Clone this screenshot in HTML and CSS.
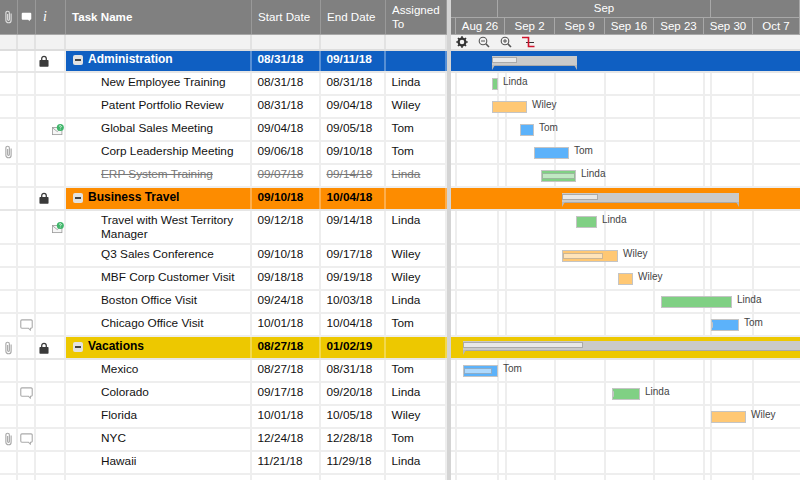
FILE: index.html
```html
<!DOCTYPE html>
<html lang="en">
<head>
  <meta charset="UTF-8">
  <title>Project Gantt</title>
  <link rel="stylesheet" href="styles.css">
</head>
<body>
  <svg class="defs" width="0" height="0">
    <symbol id="clip" viewBox="0 0 10 16"><path d="M8 4v7.600a3 3 0 0 1-6 0V3.400a2 2 0 0 1 4 0v7.400a1 1 0 0 1-2 0V4.600" fill="none" stroke="currentColor" stroke-width="1.300"/></symbol>
    <symbol id="note" viewBox="0 0 14 13"><path d="M2 1h10a1.200 1.200 0 0 1 1.200 1.200v6.600A1.200 1.200 0 0 1 12 10h-.6l-.3 2-2-2H2A1.200 1.200 0 0 1 .8 8.800V2.200A1.200 1.200 0 0 1 2 1z" fill="#fff" stroke="#aaa" stroke-width="1.200"/></symbol>
    <symbol id="lock" viewBox="0 0 11 13"><path d="M3 6V3.800a2.500 2.500 0 0 1 5 0V6" fill="none" stroke="#3a3a3a" stroke-width="1.400"/><rect x=".5" y="5.400" width="10" height="7.400" rx=".8" fill="#3a3a3a"/></symbol>
    <symbol id="mail" viewBox="0 0 15 14"><rect x=".6" y="4.600" width="11.800" height="8.800" fill="#f6f6f6" stroke="#999"/><path d="M.8 5l5.800 4.600L12 5" fill="none" stroke="#999"/><circle cx="10.400" cy="4.400" r="4.400" fill="#3fb56a"/><path d="M9.200 3.400a1.200 1.200 0 1 1 1.800 1.100c-.5.300-.6.500-.6 1M10.400 6.400v.5" fill="none" stroke="#fff" stroke-width="1"/></symbol>
  </svg>

  <div class="app">
    <div class="sheet">
      <div class="row head">
        <div class="cell icon-head"><svg class="ic-clip"><use href="#clip"/></svg></div>
        <div class="cell icon-head">
          <svg width="11" height="10" viewBox="0 0 14 13"><path d="M2 1h10a1.200 1.200 0 0 1 1.200 1.200v6.600A1.200 1.200 0 0 1 12 10h-.6l-.3 2-2-2H2A1.200 1.200 0 0 1 .8 8.800V2.200A1.200 1.200 0 0 1 2 1z" fill="#fff"/></svg>
        </div>
        <div class="cell info">i</div>
        <div class="cell name-head">Task Name</div>
        <div class="cell">Start Date</div>
        <div class="cell">End Date</div>
        <div class="cell assigned-head">Assigned To</div>
      </div>
      <div class="row sub">
        <div class="cell"></div><div class="cell"></div><div class="cell"></div><div class="cell"></div><div class="cell"></div><div class="cell"></div><div class="cell"></div>
      </div>

      <div class="row group blue first">
        <div class="cell"></div><div class="cell"></div>
        <div class="cell lockcell"><svg class="ic-lock"><use href="#lock"/></svg></div>
        <div class="cell title"><span class="toggle"></span>Administration</div>
        <div class="cell">08/31/18</div><div class="cell">09/11/18</div><div class="cell"></div>
      </div>
      <div class="row">
        <div class="cell"></div><div class="cell"></div><div class="cell"></div>
        <div class="cell task">New Employee Training</div>
        <div class="cell">08/31/18</div><div class="cell">08/31/18</div><div class="cell">Linda</div>
      </div>
      <div class="row">
        <div class="cell"></div><div class="cell"></div><div class="cell"></div>
        <div class="cell task">Patent Portfolio Review</div>
        <div class="cell">08/31/18</div><div class="cell">09/04/18</div><div class="cell">Wiley</div>
      </div>
      <div class="row">
        <div class="cell"></div><div class="cell"></div>
        <div class="cell mail"><svg class="ic-mail"><use href="#mail"/></svg></div>
        <div class="cell task">Global Sales Meeting</div>
        <div class="cell">09/04/18</div><div class="cell">09/05/18</div><div class="cell">Tom</div>
      </div>
      <div class="row">
        <div class="cell mid"><svg class="ic-clip"><use href="#clip"/></svg></div><div class="cell"></div><div class="cell"></div>
        <div class="cell task">Corp Leadership Meeting</div>
        <div class="cell">09/06/18</div><div class="cell">09/10/18</div><div class="cell">Tom</div>
      </div>
      <div class="row done">
        <div class="cell"></div><div class="cell"></div><div class="cell"></div>
        <div class="cell task">ERP System Training</div>
        <div class="cell">09/07/18</div><div class="cell">09/14/18</div><div class="cell">Linda</div>
      </div>

      <div class="row group orange">
        <div class="cell"></div><div class="cell"></div>
        <div class="cell lockcell"><svg class="ic-lock"><use href="#lock"/></svg></div>
        <div class="cell title"><span class="toggle"></span>Business Travel</div>
        <div class="cell">09/10/18</div><div class="cell">10/04/18</div><div class="cell"></div>
      </div>
      <div class="row tall">
        <div class="cell"></div><div class="cell"></div>
        <div class="cell mail"><svg class="ic-mail"><use href="#mail"/></svg></div>
        <div class="cell task">Travel with West Territory Manager</div>
        <div class="cell">09/12/18</div><div class="cell">09/14/18</div><div class="cell">Linda</div>
      </div>
      <div class="row">
        <div class="cell"></div><div class="cell"></div><div class="cell"></div>
        <div class="cell task">Q3 Sales Conference</div>
        <div class="cell">09/10/18</div><div class="cell">09/17/18</div><div class="cell">Wiley</div>
      </div>
      <div class="row">
        <div class="cell"></div><div class="cell"></div><div class="cell"></div>
        <div class="cell task">MBF Corp Customer Visit</div>
        <div class="cell">09/18/18</div><div class="cell">09/19/18</div><div class="cell">Wiley</div>
      </div>
      <div class="row">
        <div class="cell"></div><div class="cell"></div><div class="cell"></div>
        <div class="cell task">Boston Office Visit</div>
        <div class="cell">09/24/18</div><div class="cell">10/03/18</div><div class="cell">Linda</div>
      </div>
      <div class="row">
        <div class="cell"></div>
        <div class="cell mid"><svg class="ic-note"><use href="#note"/></svg></div>
        <div class="cell"></div>
        <div class="cell task">Chicago Office Visit</div>
        <div class="cell">10/01/18</div><div class="cell">10/04/18</div><div class="cell">Tom</div>
      </div>

      <div class="row group yellow">
        <div class="cell mid"><svg class="ic-clip"><use href="#clip"/></svg></div><div class="cell"></div>
        <div class="cell lockcell"><svg class="ic-lock"><use href="#lock"/></svg></div>
        <div class="cell title"><span class="toggle"></span>Vacations</div>
        <div class="cell">08/27/18</div><div class="cell">01/02/19</div><div class="cell"></div>
      </div>
      <div class="row">
        <div class="cell"></div><div class="cell"></div><div class="cell"></div>
        <div class="cell task">Mexico</div>
        <div class="cell">08/27/18</div><div class="cell">08/31/18</div><div class="cell">Tom</div>
      </div>
      <div class="row">
        <div class="cell"></div>
        <div class="cell mid"><svg class="ic-note"><use href="#note"/></svg></div>
        <div class="cell"></div>
        <div class="cell task">Colorado</div>
        <div class="cell">09/17/18</div><div class="cell">09/20/18</div><div class="cell">Linda</div>
      </div>
      <div class="row">
        <div class="cell"></div><div class="cell"></div><div class="cell"></div>
        <div class="cell task">Florida</div>
        <div class="cell">10/01/18</div><div class="cell">10/05/18</div><div class="cell">Wiley</div>
      </div>
      <div class="row">
        <div class="cell mid"><svg class="ic-clip"><use href="#clip"/></svg></div>
        <div class="cell mid"><svg class="ic-note"><use href="#note"/></svg></div>
        <div class="cell"></div>
        <div class="cell task">NYC</div>
        <div class="cell">12/24/18</div><div class="cell">12/28/18</div><div class="cell">Tom</div>
      </div>
      <div class="row">
        <div class="cell"></div><div class="cell"></div><div class="cell"></div>
        <div class="cell task">Hawaii</div>
        <div class="cell">11/21/18</div><div class="cell">11/29/18</div><div class="cell">Linda</div>
      </div>
      <div class="row">
        <div class="cell"></div><div class="cell"></div><div class="cell"></div>
        <div class="cell task">Seattle</div>
        <div class="cell">12/03/18</div><div class="cell">01/02/19</div><div class="cell">Wiley</div>
      </div>
    </div>

    <div class="splitter"></div>

    <div class="gantt">
      <div class="months">
        <div class="month" style="width:47px"></div>
        <div class="month" style="width:213px">Sep</div>
        <div class="month" style="width:89px"></div>
      </div>
      <div class="weeks">
        <div class="week" style="width:5px"></div>
        <div class="week" style="width:49px">Aug 26</div>
        <div class="week" style="width:50px">Sep 2</div>
        <div class="week" style="width:50px">Sep 9</div>
        <div class="week" style="width:49px">Sep 16</div>
        <div class="week" style="width:50px">Sep 23</div>
        <div class="week" style="width:49px">Sep 30</div>
        <div class="week" style="width:47px">Oct 7</div>
      </div>
      <div class="tools">
        <svg width="12" height="12" viewBox="0 0 12 12"><circle cx="6" cy="6" r="3.400" fill="none" stroke="#333" stroke-width="2.200"/><path d="M6 .3v2M6 9.700v2M.3 6h2M9.700 6h2M2 2l1.400 1.400M8.600 8.600L10 10M10 2L8.600 3.400M3.400 8.600L2 10" stroke="#333" stroke-width="1.700"/></svg>
        <svg width="12" height="12" viewBox="0 0 12 12"><circle cx="5" cy="5" r="3.800" fill="none" stroke="#555" stroke-width="1.100"/><path d="M7.800 7.800L11 11" stroke="#555" stroke-width="1.600"/><path d="M3 5h4" stroke="#555"/></svg>
        <svg width="12" height="12" viewBox="0 0 12 12"><circle cx="5" cy="5" r="3.800" fill="none" stroke="#555" stroke-width="1.100"/><path d="M7.800 7.800L11 11" stroke="#555" stroke-width="1.600"/><path d="M3 5h4M5 3v4" stroke="#555"/></svg>
        <svg width="13" height="12" viewBox="0 0 13 12"><path d="M0 1.500h6.500V5" fill="none" stroke="#d0142c" stroke-width="1.600"/><path d="M4 6.500h8" stroke="#333"/><path d="M6.500 5v5.500H12.500" fill="none" stroke="#d0142c" stroke-width="1.600"/></svg>
      </div>

      <div class="chart">
        <div class="vline" style="left:4px"></div>
        <div class="vline" style="left:46px"></div>
        <div class="vline" style="left:54px"></div>
        <div class="vline" style="left:103px"></div>
        <div class="vline" style="left:153px"></div>
        <div class="vline" style="left:202px"></div>
        <div class="vline" style="left:252px"></div>
        <div class="vline" style="left:259px"></div>
        <div class="vline" style="left:301px"></div>

        <div class="line group blue first">
          <div class="summary" style="left:41px;width:85px"><div class="part" style="width:25px"></div></div>
        </div>
        <div class="line"><div class="item" style="left:41px"><div class="bar green" style="width:6px"></div><span>Linda</span></div></div>
        <div class="line"><div class="item" style="left:41px"><div class="bar amber" style="width:35px"></div><span>Wiley</span></div></div>
        <div class="line"><div class="item" style="left:69px"><div class="bar sky" style="width:14px"></div><span>Tom</span></div></div>
        <div class="line"><div class="item" style="left:83px"><div class="bar sky" style="width:35px"></div><span>Tom</span></div></div>
        <div class="line"><div class="item" style="left:90px"><div class="bar green" style="width:35px"><div class="part" style="width:33px"></div></div><span>Linda</span></div></div>
        <div class="line group orange">
          <div class="summary" style="left:111px;width:177px"><div class="part" style="width:36px"></div></div>
        </div>
        <div class="line tall"><div class="item" style="left:125px"><div class="bar green" style="width:21px"></div><span>Linda</span></div></div>
        <div class="line"><div class="item" style="left:111px"><div class="bar amber" style="width:56px"><div class="part" style="width:40px"></div></div><span>Wiley</span></div></div>
        <div class="line"><div class="item" style="left:167px"><div class="bar amber" style="width:15px"></div><span>Wiley</span></div></div>
        <div class="line"><div class="item" style="left:210px"><div class="bar green" style="width:71px"></div><span>Linda</span></div></div>
        <div class="line"><div class="item" style="left:260px"><div class="bar sky nick" style="width:28px"></div><span>Tom</span></div></div>
        <div class="line group yellow">
          <div class="summary open" style="left:12px;width:360px"><div class="part" style="width:120px"></div></div>
        </div>
        <div class="line"><div class="item" style="left:12px"><div class="bar sky" style="width:35px"><div class="part" style="width:28px"></div></div><span>Tom</span></div></div>
        <div class="line"><div class="item" style="left:161px"><div class="bar green nick" style="width:28px"></div><span>Linda</span></div></div>
        <div class="line"><div class="item" style="left:260px"><div class="bar amber" style="width:35px"></div><span>Wiley</span></div></div>
        <div class="line"></div>
        <div class="line"></div>
        <div class="line"></div>
      </div>
    </div>
  </div>
</body>
</html>
```

FILE: styles.css
```css
body {
  margin: 0;
  background: #fff;
  font-family: "Liberation Sans", Arial, sans-serif;
  font-size: 11.8px;
  color: #111;
}
.defs {
  display: block;
  height: 0;
}
.app {
  display: flex;
  width: 800px;
  height: 480px;
  overflow: hidden;
}

/* left grid */
.sheet {
  width: 447px;
  flex: none;
}
.row {
  display: grid;
  grid-template-columns: 18px 18px 30px 186px 69px 65px 61px;
  height: 22.93px;
  box-sizing: border-box;
  border-bottom: 2px solid #eee;
}
.row.first,
.line.first {
  height: 22.2px;
}
.row.tall {
  height: 34.7px;
}
.cell {
  border-right: 2px solid #eee;
  padding: 2px 0 0 5.500px;
  box-sizing: border-box;
  min-width: 0;
  line-height: 14px;
}
.cell.mid,
.cell.lockcell,
.cell.mail {
  padding: 0;
  display: flex;
  align-items: center;
  justify-content: center;
}
.cell.lockcell {
  justify-content: flex-start;
  padding-left: 3px;
}
.cell.mail {
  justify-content: flex-start;
  padding-left: 16px;
}
.cell.task {
  padding-left: 35px;
  padding-right: 4px;
}
.done .cell {
  color: #777;
  text-decoration: line-through;
}

.head {
  height: 35px;
  background: #808080;
  color: #fff;
  border-bottom: 1px solid #a8a8a8;
}
.head .cell {
  display: flex;
  align-items: center;
  border-right: 1px solid #999;
  padding: 0 0 0 6px;
  font-size: 11.6px;
}
.head .icon-head {
  padding: 0;
  justify-content: center;
  color: #ddd;
}
.head .info {
  font-family: "Liberation Serif", serif;
  font-style: italic;
  font-size: 14px;
  color: #fff;
  padding-left: 7px;
}
.head .name-head {
  font-weight: bold;
}
.head .assigned-head {
  line-height: 14px;
}
.sub {
  height: 16px;
  background: #f2f2f2;
  border-bottom: 2px solid #ddd;
}
.sub .cell {
  border-right-color: #e2e2e2;
}

.group {
  font-weight: bold;
  color: #000;
}
.group.blue {
  color: #fff;
}
.row.group .cell:nth-child(n+4) {
  border-right-color: rgba(255, 255, 255, .3);
}
.row.group {
  border-bottom-color: #e6e6e6;
}
.row.blue .cell:nth-child(n+4) { background: #0f5fc2; }
.row.orange .cell:nth-child(n+4) { background: #fd8c00; }
.row.yellow .cell:nth-child(n+4) { background: #edc800; }
.line.blue { background: #0f5fc2; }
.line.orange { background: #fd8c00; }
.line.yellow { background: #edc800; }

.cell.title {
  display: flex;
  align-items: flex-start;
  padding-left: 7px;
  font-size: 12px;
}
.first .cell.title,
.first .cell {
  padding-top: 1px;
}
.first .cell.lockcell {
  padding-top: 0;
}
.toggle {
  width: 10px;
  height: 10px;
  margin: 3px 5px 0 0;
  background: #e2e2e2;
  border-radius: 2px;
  position: relative;
  flex: none;
}
.toggle::after {
  content: "";
  position: absolute;
  left: 2px;
  right: 2px;
  top: 4px;
  height: 2px;
  background: #444;
}

.ic-clip {
  width: 9px;
  height: 14px;
  color: #a8a8a8;
}
.head .ic-clip {
  color: #ddd;
}
.ic-note {
  width: 13px;
  height: 12px;
}
.ic-lock {
  width: 10px;
  height: 12px;
}
.ic-mail {
  width: 14px;
  height: 13px;
  display: block;
}

.splitter {
  width: 4px;
  flex: none;
  background: #d4d4d4;
}

/* gantt */
.gantt {
  flex: 1;
  min-width: 0;
  overflow: hidden;
}
.months,
.weeks {
  display: flex;
  box-sizing: border-box;
  background: #808080;
  color: #fff;
  text-align: center;
  font-size: 11.5px;
  border-bottom: 1px solid #a8a8a8;
}
.months {
  height: 18px;
  line-height: 16px;
}
.weeks {
  height: 17px;
  line-height: 17px;
}
.month,
.week {
  flex: none;
  box-sizing: border-box;
  border-right: 1px solid #a8a8a8;
}
.tools {
  display: flex;
  align-items: center;
  gap: 10px;
  box-sizing: border-box;
  height: 16px;
  padding-left: 5px;
  background: #f2f2f2;
  border-bottom: 2px solid #ddd;
}
.chart {
  position: relative;
}
.vline {
  position: absolute;
  top: 0;
  bottom: 0;
  width: 2px;
  background: #eee;
}
.line {
  position: relative;
  height: 22.93px;
  box-sizing: border-box;
  border-bottom: 2px solid #eee;
}
.line.group {
  border-bottom-color: #e6e6e6;
}
.line.tall {
  height: 34.7px;
}
.item {
  position: absolute;
  top: 5px;
  display: flex;
  gap: 5px;
  font-size: 10px;
  line-height: 12px;
  color: #444;
}
.item span {
  margin-top: -2px;
}
.bar {
  height: 12px;
  box-sizing: border-box;
  border: 1px solid #c4c4c4;
  flex: none;
  position: relative;
}
.bar.green { background: #80d084; }
.bar.amber { background: #ffc874; }
.bar.sky { background: #5cb2fa; }
.bar.nick::before {
  content: "";
  position: absolute;
  left: 0;
  top: 2px;
  width: 1px;
  height: 6px;
  border-radius: 0 3px 3px 0;
  background: #c4c4c4;
}
.bar .part {
  height: 6px;
  margin-top: 2px;
  background: rgba(255, 255, 255, .5);
  border: 1px solid rgba(0, 0, 0, .2);
  box-sizing: border-box;
}
.summary {
  position: absolute;
  top: 5px;
  height: 10px;
  background: #cacaca;
  border-bottom: 1px solid #aaa;
  box-sizing: border-box;
}
.summary.open {
  top: 4px;
}
.summary::before,
.summary::after {
  content: "";
  position: absolute;
  top: 9px;
  border-top: 5px solid #b8b8b8;
}
.summary::before {
  left: 0;
  border-right: 3px solid transparent;
}
.summary::after {
  right: 0;
  border-left: 3px solid transparent;
}
.summary.open::after {
  display: none;
}
.summary .part {
  height: 6px;
  margin-top: 1px;
  background: #e8e8e8;
  border: 1px solid #aaa;
  box-sizing: border-box;
}
```
